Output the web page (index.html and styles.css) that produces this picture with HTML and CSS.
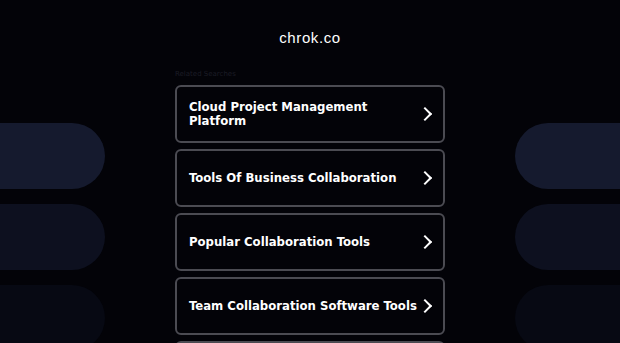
FILE: index.html
```html
<!DOCTYPE html>
<html>

<head>
    <meta charset="UTF-8">
    <title>chrok.co</title>
    <link rel="stylesheet" href="styles.css">
</head>

<body>
    <div class="side side-left">
        <div class="pill p1"></div>
        <div class="pill p2"></div>
        <div class="pill p3"></div>
    </div>
    <div class="side side-right">
        <div class="pill p1"></div>
        <div class="pill p2"></div>
        <div class="pill p3"></div>
    </div>

    <div class="page">
        <h1 class="domain">chrok.co</h1>
        <div class="searches">
            <p class="label">Related Searches</p>
            <ul class="list">
                <li><a href="#">Cloud Project Management Platform</a></li>
                <li><a href="#">Tools Of Business Collaboration</a></li>
                <li><a href="#">Popular Collaboration Tools</a></li>
                <li><a href="#">Team Collaboration Software Tools</a></li>
                <li><a href="#">Online Project Management Tools</a></li>
            </ul>
        </div>
    </div>
</body>

</html>
```

FILE: styles.css
```css
* {
    padding: 0;
    margin: 0;
    box-sizing: border-box;
}

html,
body {
    height: 100%;
    overflow: hidden;
}

body {
    background: #030308;
    font-family: "DejaVu Sans", Verdana, sans-serif;
    color: #fff;
}

ul {
    list-style: none;
}

/* decorative pills at the sides */
.side {
    position: absolute;
    top: 123px;
    width: 160px;
    display: flex;
    flex-direction: column;
    gap: 15px;
}

.side-left {
    left: -55px;
}

.side-right {
    right: -55px;
}

.pill {
    height: 66px;
    border-radius: 33px;
}

.p1 {
    background: #151a2e;
}

.p2 {
    background: #0d101f;
}

.p3 {
    background: #070913;
}

.page {
    position: relative;
    width: 270px;
    margin: 0 auto;
}

.domain {
    font-family: "Liberation Sans", Arial, sans-serif;
    font-weight: normal;
    font-size: 15px;
    letter-spacing: 0.6px;
    text-align: center;
    padding-top: 29px;
    line-height: 17px;
}

.label {
    font-size: 7px;
    color: #1b1c26;
    margin-top: 24px;
    height: 9px;
    line-height: 9px;
}

.list {
    margin-top: 6px;
}

.list li {
    margin-bottom: 6px;
}

.list a {
    display: flex;
    align-items: center;
    justify-content: space-between;
    height: 58px;
    padding: 0 10px 0 12px;
    border: 2px solid #4b4b52;
    border-radius: 6px;
    color: #fff;
    text-decoration: none;
    font-family: "DejaVu Sans Condensed", "DejaVu Sans", sans-serif;
    font-weight: bold;
    font-size: 13px;
    line-height: 14px;
}

.list a::after {
    content: "";
    flex: none;
    width: 8px;
    height: 8px;
    margin: 0 3px 0 3px;
    border-top: 2px solid #fff;
    border-right: 2px solid #fff;
    transform: rotate(45deg);
}
```
